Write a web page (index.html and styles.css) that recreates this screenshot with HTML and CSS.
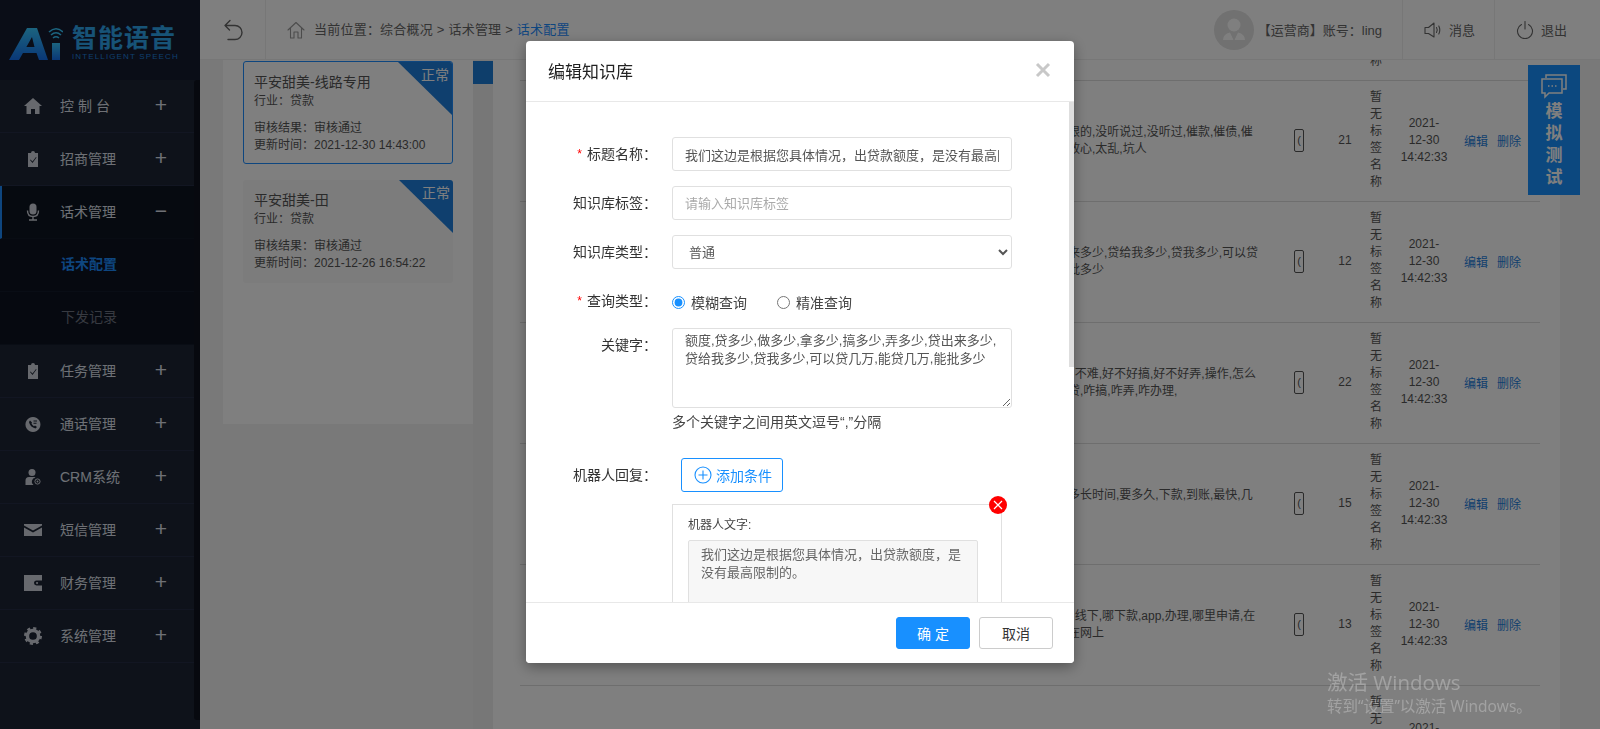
FILE: index.html
```html
<!DOCTYPE html>
<html lang="zh-CN">
<head>
<meta charset="utf-8">
<title>编辑知识库</title>
<link rel="stylesheet" href="styles.css">
</head>
<body>
<div class="app">
  <aside class="sidebar">
    <div class="logo">
      <svg class="logo-mark" viewBox="0 0 54 36" width="54" height="36">
        <defs><linearGradient id="lg" x1="0" y1="0" x2="0" y2="1"><stop offset="0" stop-color="#38c8ff"/><stop offset="1" stop-color="#1470f0"/></linearGradient></defs>
        <path fill="url(#lg)" d="M0 34 L18 2 H28 L39 34 H30 L27.5 27 H13 L17 21 H25.5 L23 11 L10 34 Z"/>
        <rect x="43" y="17" width="8" height="17" fill="url(#lg)"/>
        <path fill="none" stroke="#38c8ff" stroke-width="1.6" d="M40 6 Q47 -0.5 54 6 M42 9 Q47 4.5 52 9 M44 12 Q47 9.5 50 12"/>
      </svg>
      <div class="logo-text">
        <div class="logo-cn">智能语音</div>
        <div class="logo-en">INTELLIGENT SPEECH</div>
      </div>
    </div>
    <nav class="menu">
      <div class="menu-item"><svg class="mi" viewBox="0 0 18 18"><path d="M9 1 L18 9 H15.5 V17 H11 V12 H7 V17 H2.5 V9 H0 Z"/></svg><span class="mt spaced">控制台</span><span class="plus">+</span></div>
      <div class="menu-item"><svg class="mi" viewBox="0 0 18 18"><path fill-rule="evenodd" d="M4 3 H7 Q7 1 9 1 Q11 1 11 3 H14 V17 H4 Z M6 10 L8.500 13 L12.500 7.500 L12 7 L8.500 11.500 L6.500 9.500 Z"/></svg><span class="mt">招商管理</span><span class="plus">+</span></div>
      <div class="menu-item active"><svg class="mi" viewBox="0 0 18 18"><rect x="5.500" y="0.500" width="7" height="11" rx="3.500"/><path fill="none" stroke="currentColor" stroke-width="1.400" d="M3.500 7.500 Q3.500 13.500 9 13.500 Q14.500 13.500 14.500 7.500 M9 13.500 V16.500 M5 17 H13"/></svg><span class="mt">话术管理</span><span class="plus">−</span></div>
      <div class="sub-item current">话术配置</div>
      <div class="sub-item">下发记录</div>
      <div class="menu-item"><svg class="mi" viewBox="0 0 18 18"><path fill-rule="evenodd" d="M4 3 H7 Q7 1 9 1 Q11 1 11 3 H14 V17 H4 Z M6 10 L8.500 13 L12.500 7.500 L12 7 L8.500 11.500 L6.500 9.500 Z"/></svg><span class="mt">任务管理</span><span class="plus">+</span></div>
      <div class="menu-item"><svg class="mi" viewBox="0 0 18 18"><path fill-rule="evenodd" d="M9 2 A7.500 7.500 0 1 1 8.900 2 Z M6 5.500 L5 7 Q6 12 11.500 13.500 L13 12 L11 10.500 L10 11.200 Q8.200 10.300 7.500 8.500 L8 7.500 Z M9.500 5.500 V6.500 H13 V5.500 Z M9.500 7.800 V8.800 H12.500 V7.800 Z"/></svg><span class="mt">通话管理</span><span class="plus">+</span></div>
      <div class="menu-item"><svg class="mi" viewBox="0 0 18 18"><circle cx="8" cy="4.500" r="3.500"/><path d="M1.500 17 V12.500 Q1.500 9 5 9 H10 Q11 9 11.500 9.700 A4 4 0 0 0 9.500 17 Z"/><circle cx="13.500" cy="13.500" r="2.600" fill="none" stroke="currentColor" stroke-width="1"/><circle cx="13.500" cy="13.500" r="0.900"/></svg><span class="mt">CRM系统</span><span class="plus">+</span></div>
      <div class="menu-item"><svg class="mi" viewBox="0 0 18 18"><path d="M0 3 H18 V4.500 L9 9.500 L0 4.500 Z M0 6.500 L9 11.500 L18 6.500 V15 H0 Z"/></svg><span class="mt">短信管理</span><span class="plus">+</span></div>
      <div class="menu-item"><svg class="mi" viewBox="0 0 18 18"><path fill-rule="evenodd" d="M0 1 H18 V6.500 H12.500 A2.500 2.500 0 0 0 12.500 11.500 H18 V17 H0 Z M13 8 A1 1 0 1 0 13.100 8 Z"/></svg><span class="mt">财务管理</span><span class="plus">+</span></div>
      <div class="menu-item"><svg class="mi" viewBox="0 0 18 18"><circle cx="9" cy="9" r="5.600" fill="none" stroke="currentColor" stroke-width="3.500"/><circle cx="9" cy="9" r="7.800" fill="none" stroke="currentColor" stroke-width="2.400" stroke-dasharray="3.100 3.020"/></svg><span class="mt">系统管理</span><span class="plus">+</span></div>
    </nav>
    <div class="side-scroll"></div>
  </aside>

  <div class="main">
    <header class="topbar">
      <div class="back">
        <svg viewBox="0 0 22 22" width="22" height="22" class="line-icon"><path d="M3 6.500 H13 A7 7 0 0 1 13 20.500 H6 M3 6.500 L8 1.500 M3 6.500 L7.500 11"/></svg>
      </div>
      <div class="crumbs">
        <svg viewBox="0 0 18 18" width="18" height="18" class="line-icon thin soft"><path d="M1 9 L9 1.500 L17 9 M3.500 7 V17 H7 V11 H11 V17 H14.500 V7"/></svg>
        <span class="crumb-text">当前位置：综合概况 &gt; 话术管理 &gt; <span class="crumb-now">话术配置</span></span>
      </div>
      <div class="user">
        <div class="avatar"><svg viewBox="0 0 40 40" width="40" height="40"><circle cx="20" cy="15" r="6.500" fill="#fff"/><path fill="#fff" d="M9 30 Q9 24 16 22.500 L19.500 30 Z M31 30 Q31 24 24 22.500 L20.500 30 Z"/></svg></div>
        <span class="who">【运营商】账号：ling</span>
      </div>
      <div class="tool">
        <svg viewBox="0 0 18 18" width="18" height="18" class="line-icon thin"><path d="M1 6.500 H4.500 L10 2 V16 L4.500 12.500 H1 Z M12.500 6.500 Q14 9 12.500 11.500 M14.800 5 Q16.800 9 14.800 13"/></svg>
        <span>消息</span>
      </div>
      <div class="tool">
        <svg viewBox="0 0 18 18" width="18" height="18" class="line-icon thin"><path d="M5.500 3.500 A7.500 7.500 0 1 0 12.500 3.500 M9 0.500 V8"/></svg>
        <span>退出</span>
      </div>
    </header>

    <div class="content">
      <section class="panel">
        <article class="card selected">
          <span class="corner"></span><span class="corner-text">正常</span>
          <h3>平安甜美-线路专用</h3>
          <p class="trade">行业：贷款</p>
          <p>审核结果：审核通过</p>
          <p>更新时间：2021-12-30 14:43:00</p>
        </article>
        <article class="card">
          <span class="corner"></span><span class="corner-text">正常</span>
          <h3>平安甜美-田</h3>
          <p class="trade">行业：贷款</p>
          <p>审核结果：审核通过</p>
          <p>更新时间：2021-12-26 16:54:22</p>
        </article>
      </section>
      <div class="strip"><div class="strip-tab"></div></div>
      <section class="table-wrap">
        <div class="rows">
          <div class="row"><div></div><div class="kw"></div><div></div><div class="cnt"></div><div class="tag">暂无标签名称</div><div class="date"></div><div class="ops"></div></div>
          <div class="row"><div></div><div class="kw">限的,没听说过,没听过,催款,催债,催<br>放心,太乱,坑人</div><div><i class="pill">(</i></div><div class="cnt">21</div><div class="tag">暂无标签名称</div><div class="date">2021-<br>12-30<br>14:42:33</div><div class="ops"><a>编辑</a><a>删除</a></div></div>
          <div class="row"><div></div><div class="kw">来多少,贷给我多少,贷我多少,可以贷<br>批多少</div><div><i class="pill">(</i></div><div class="cnt">12</div><div class="tag">暂无标签名称</div><div class="date">2021-<br>12-30<br>14:42:33</div><div class="ops"><a>编辑</a><a>删除</a></div></div>
          <div class="row"><div></div><div class="kw">,,不难,好不好搞,好不好弄,操作,怎么<br>贷,咋搞,咋弄,咋办理,</div><div><i class="pill">(</i></div><div class="cnt">22</div><div class="tag">暂无标签名称</div><div class="date">2021-<br>12-30<br>14:42:33</div><div class="ops"><a>编辑</a><a>删除</a></div></div>
          <div class="row"><div></div><div class="kw">多长时间,要多久,下款,到账,最快,几<br>&nbsp;</div><div><i class="pill">(</i></div><div class="cnt">15</div><div class="tag">暂无标签名称</div><div class="date">2021-<br>12-30<br>14:42:33</div><div class="ops"><a>编辑</a><a>删除</a></div></div>
          <div class="row"><div></div><div class="kw">,,线下,哪下款,app,办理,哪里申请,在<br>在网上</div><div><i class="pill">(</i></div><div class="cnt">13</div><div class="tag">暂无标签名称</div><div class="date">2021-<br>12-30<br>14:42:33</div><div class="ops"><a>编辑</a><a>删除</a></div></div>
          <div class="row"><div></div><div class="kw"></div><div></div><div class="cnt"></div><div class="tag">暂无标签名称</div><div class="date">2021-<br>12-30<br>14:42:33</div><div class="ops"></div></div>
        </div>
      </section>
      <div class="gutter"></div>
    </div>
  </div>
</div>

<button class="sim" type="button">
  <svg viewBox="0 0 28 28" width="28" height="28" class="sim-icon"><path d="M6 5 V2 H26 V16 H23"/><path d="M2 6 H22 V20 H9 L5 24 V20 H2 Z"/><path class="dots" d="M8 13 H9.500 M11.500 13 H13 M15 13 H16.500"/></svg>
  <span>模</span><span>拟</span><span>测</span><span>试</span>
</button>

<div class="mask">
  <div class="modal">
    <div class="modal-head">
      <h2>编辑知识库</h2>
      <svg class="close" viewBox="0 0 16 16" width="16" height="16"><path d="M2 2 L14 14 M14 2 L2 14"/></svg>
    </div>
    <div class="modal-body">
      <div class="field">
        <label class="lab"><em>*</em>标题名称：</label>
        <input class="ctl" type="text" value="我们这边是根据您具体情况，出贷款额度，是没有最高限制的。">
      </div>
      <div class="field">
        <label class="lab">知识库标签：</label>
        <input class="ctl" type="text" placeholder="请输入知识库标签">
      </div>
      <div class="field">
        <label class="lab">知识库类型：</label>
        <select class="ctl"><option>普通</option></select>
      </div>
      <div class="field tight">
        <label class="lab"><em>*</em>查询类型：</label>
        <div class="radios">
          <label class="radio"><input type="radio" name="q" checked>模糊查询</label>
          <label class="radio"><input type="radio" name="q">精准查询</label>
        </div>
      </div>
      <div class="field">
        <label class="lab">关键字：</label>
        <div class="stack">
          <textarea class="ctl area">额度,贷多少,做多少,拿多少,搞多少,弄多少,贷出来多少,贷给我多少,贷我多少,可以贷几万,能贷几万,能批多少</textarea>
          <p class="hint">多个关键字之间用英文逗号“,”分隔</p>
        </div>
      </div>
      <div class="field tight">
        <label class="lab">机器人回复：</label>
        <button class="add" type="button">
          <svg viewBox="0 0 18 18" width="18" height="18"><circle cx="9" cy="9" r="8"/><path d="M9 4.500 V13.500 M4.500 9 H13.500"/></svg>添加条件
        </button>
      </div>
      <div class="reply">
        <span class="del"><svg viewBox="0 0 18 18" width="18" height="18"><path d="M5 5 L13 13 M13 5 L5 13"/></svg></span>
        <div class="reply-lab">机器人文字:</div>
        <textarea class="reply-text" disabled>我们这边是根据您具体情况，出贷款额度，是没有最高限制的。</textarea>
      </div>
      <div class="thumb"></div>
    </div>
    <div class="modal-foot">
      <button class="btn primary" type="button">确 定</button>
      <button class="btn" type="button">取消</button>
    </div>
  </div>
</div>

<div class="watermark">
  <div class="wm-1">激活 Windows</div>
  <div class="wm-2">转到“设置”以激活 Windows。</div>
</div>
</body>
</html>
```

FILE: styles.css
```css
* { box-sizing: border-box; }
html, body { margin: 0; height: 100%; overflow: hidden; }
body {
  font-family: "Liberation Sans", "Noto Sans CJK SC", sans-serif;
  font-size: 13px;
  color: #666;
  background: #f3f3f3;
}
h2, h3, p { margin: 0; font-weight: normal; }

.app { display: flex; height: 729px; }

/* sidebar */
.sidebar { position: relative; width: 200px; flex: none; background: #1c2434; color: #dde1ea; }
.logo { height: 80px; background: #141b2e; display: flex; align-items: flex-start; padding: 26px 0 0 9px; }
.logo-mark { margin-top: 0; flex: none; }
.logo-text { margin-left: 9px; width: 106px; }
.logo-cn { font-size: 25px; line-height: 25px; font-weight: 700; letter-spacing: 1px; color: #2ea6ee; white-space: nowrap; }
.logo-en { font-size: 8px; line-height: 10px; margin-top: 1px; letter-spacing: 1.13px; color: #1f7fdc; white-space: nowrap; }
.menu-item { height: 53px; display: flex; align-items: center; padding: 0 0 2px 24px; border-bottom: 1px solid #242d44; font-size: 14px; }
.menu-item.active { background: #0d1420; border-left: 2px solid #1c8cff; padding-left: 22px; border-bottom-color: #111827; }
.mi { width: 18px; height: 18px; fill: currentColor; color: #cfd3dc; flex: none; margin-top: 2px; }
.mt { margin-left: 18px; width: 84px; }
.mt.spaced { letter-spacing: 4px; }
.plus { font-size: 21px; line-height: 20px; font-weight: 400; width: 20px; text-align: center; margin-left: 7px; }
.sub-item { height: 53px; line-height: 50px; padding-left: 61px; background: #0c1220; color: #6e7482; font-size: 14px; border-bottom: 1px solid #121a2a; }
.sub-item.current { color: #1c8cff; font-weight: 700; }
.side-scroll { position: absolute; top: 80px; right: 0; width: 6px; height: 640px; background: #0e121e; border-radius: 3px 0 0 3px; }

/* main column */
.main { flex: 1; min-width: 0; display: flex; flex-direction: column; }
.topbar { height: 60px; flex: none; background: #fff; border-bottom: 1px solid #eee; display: flex; align-items: center; color: #666; }
.line-icon { fill: none; stroke: #666; stroke-width: 1.4; stroke-linecap: round; stroke-linejoin: round; flex: none; }
.line-icon.thin { stroke-width: 1.1; }
.line-icon.soft { stroke: #999; }
.back { width: 66px; height: 100%; border-right: 1px solid #eee; display: flex; align-items: center; padding-left: 22px; }
.crumbs { flex: 1; display: flex; align-items: center; gap: 9px; padding: 0 0 0 21px; height: 100%; color: #666; }
.crumb-text { white-space: nowrap; margin-top: -2px; letter-spacing: .22px; }
.crumb-now { color: #1c8cff; }
.user { display: flex; align-items: center; height: 100%; border-right: 1px solid #eee; padding-right: 20px; }
.avatar { width: 40px; height: 40px; border-radius: 50%; background: #e2e2e2; overflow: hidden; margin-right: 4px; }
.who { white-space: nowrap; }
.tool { height: 100%; width: 92px; display: flex; align-items: center; gap: 7px; padding-left: 21px; border-right: 1px solid #eee; white-space: nowrap; }
.tool:last-child { border-right: 0; width: 105px; }

.content { flex: 1; min-height: 0; display: flex; padding-left: 23px; overflow: hidden; }
.panel { width: 250px; height: 364px; flex: none; background: #fff; padding: 1px 20px 0; display: flex; flex-direction: column; gap: 16px; }
.card { position: relative; height: 103px; background: #f8f8f8; border-radius: 3px; padding: 11px 10px 0 11px; font-size: 12px; line-height: 17px; color: #555; overflow: hidden; }
.card.selected { background: #fff; border: 1px solid #1c8cff; padding: 11px 9px 0 10px; }
.card h3 { font-size: 14px; line-height: 18px; color: #555; margin-bottom: 2px; }
.trade { margin-bottom: 10px; }
.corner { position: absolute; top: 0; right: 0; width: 0; height: 0; border-style: solid; border-width: 0 54px 53px 0; border-color: transparent #1f7fdc transparent transparent; }
.corner-text { position: absolute; top: 3px; right: 3px; font-size: 14px; line-height: 20px; color: #fff; }
.strip { width: 20px; flex: none; background: #efefef; }
.strip-tab { height: 23px; margin-top: 1px; background: #1c7cd6; }
.table-wrap { flex: 1; min-width: 0; background: #fff; overflow: hidden; }
.gutter { width: 40px; flex: none; }
.rows { margin: -100px 20px 0 27px; }
.row { height: 121px; padding-bottom: 2px; border-bottom: 1px solid #ddd; display: grid; grid-template-columns: 548px 216px 30px 52px 20px 76px 78px; align-items: center; color: #555; font-size: 12px; }
.kw { line-height: 17px; white-space: nowrap; margin-top: 2px; }
.pill { display: block; width: 10px; height: 23px; margin-left: 10px; border: 1px solid #555; border-radius: 2px; font-style: normal; font-size: 11px; line-height: 20px; text-align: center; overflow: hidden; }
.cnt { text-align: center; padding-left: 10px; }
.tag { width: 12px; margin: 0 auto; line-height: 17px; word-break: break-all; }
.date { line-height: 17px; text-align: center; }
.ops { padding-left: 2px; display: flex; gap: 9px; color: #1f7fdc; white-space: nowrap; }

.sim { position: fixed; left: 1528px; top: 65px; width: 52px; height: 130px; border: 0; padding: 8px 0 0; background: #1890ff; color: #fff; font: 700 17px/22px "Liberation Sans", "Noto Sans CJK SC", sans-serif; display: flex; flex-direction: column; align-items: center; }
.sim-icon { fill: none; stroke: #fff; stroke-width: 1.5; flex: none; }

/* dialog */
.mask { position: fixed; inset: 0; background: rgba(0, 0, 0, .5); display: flex; justify-content: center; align-items: flex-start; }
.modal { width: 548px; height: 622px; margin-top: 41px; background: #fff; border-radius: 4px; box-shadow: 0 4px 14px rgba(0, 0, 0, .35); display: flex; flex-direction: column; overflow: hidden; color: #333; }
.modal-head { height: 61px; flex: none; border-bottom: 1px solid #e8e8e8; display: flex; align-items: center; justify-content: space-between; padding: 0 23px 2px 22px; }
.modal-head h2 { font-size: 17px; color: #222; }
.close { fill: none; stroke: #c8c8c8; stroke-width: 3; }
.modal-body { position: relative; flex: 1; min-height: 0; overflow: hidden; padding-top: 35px; }
.thumb { position: absolute; top: 0; right: 0; width: 5px; height: 265px; background: #dedede; }
.field { display: grid; grid-template-columns: 131px 340px; column-gap: 15px; margin-bottom: 15px; align-items: start; }
.field.tight { margin-bottom: 8px; }
.lab { font-size: 14px; line-height: 34px; text-align: right; color: #333; white-space: nowrap; }
.lab em { color: #f00; font-style: normal; font-size: 12px; margin-right: 5px; vertical-align: 1px; }
.ctl { width: 340px; height: 34px; border: 1px solid #e0e0e0; border-radius: 3px; padding: 0 12px; font: 13px "Liberation Sans", "Noto Sans CJK SC", sans-serif; color: #555; background: #fff; outline: none; }
.ctl::placeholder { color: #aaa; }
.radios { display: flex; gap: 30px; height: 36px; align-items: center; }
.radio { display: flex; align-items: center; gap: 6px; font-size: 14px; color: #444; }
.radio input { margin: 0; width: 13px; height: 13px; accent-color: #1890ff; }
.stack { width: 340px; }
.area { display: block; height: 80px; padding: 3px 12px; line-height: 18px; resize: vertical; }
.hint { font-size: 14px; line-height: 20px; margin-top: 4px; color: #444; margin-bottom: 11px; }
.add { width: 102px; height: 34px; margin-left: 9px; border: 1px solid #1890ff; border-radius: 3px; background: #fff; color: #1890ff; padding: 0 0 0 12px; font: 14px "Liberation Sans", "Noto Sans CJK SC", sans-serif; display: flex; align-items: center; gap: 4px; white-space: nowrap; }
.add svg { fill: none; stroke: #1890ff; stroke-width: 1.1; flex: none; }
.reply { position: relative; margin: 12px 0 0 146px; width: 330px; height: 200px; border: 1px solid #e0e0e0; padding: 12px 15px 0; }
.del { position: absolute; top: -9px; right: -6px; width: 18px; height: 18px; border-radius: 50%; background: #f00; }
.del svg { display: block; fill: none; stroke: #fff; stroke-width: 1.2; }
.reply-lab { font-size: 12px; line-height: 17px; color: #444; }
.reply-text { display: block; margin-top: 6px; width: 290px; height: 120px; padding: 5px 12px; background: #f7f7f7; border: 1px solid #e0e0e0; border-radius: 2px; font: 13px/18px "Liberation Sans", "Noto Sans CJK SC", sans-serif; color: #666; resize: none; opacity: 1; }
.modal-foot { height: 61px; flex: none; border-top: 1px solid #e8e8e8; background: #fff; display: flex; justify-content: flex-end; align-items: center; gap: 9px; padding: 0 21px 0 0; }
.btn { width: 74px; height: 32px; border: 1px solid #ccc; border-radius: 3px; background: #fff; color: #333; font: 14px "Liberation Sans", "Noto Sans CJK SC", sans-serif; padding: 0; }
.btn.primary { background: #1890ff; border-color: #1890ff; color: #fff; }

.watermark { position: fixed; left: 1327px; top: 668px; color: rgba(255, 255, 255, .28); font-family: "Open Sans", "Noto Sans CJK SC", sans-serif; white-space: nowrap; pointer-events: none; }
.wm-1 { font-size: 20.500px; line-height: 28px; }
.wm-2 { font-size: 15.500px; line-height: 20px; margin-top: 0; }
```
